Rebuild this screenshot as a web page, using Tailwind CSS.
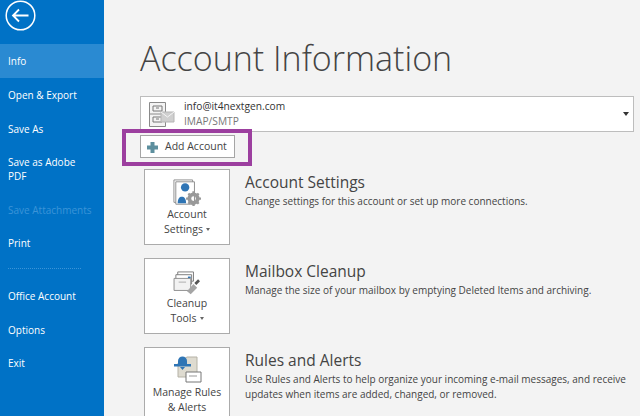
<!DOCTYPE html>
<html lang="en">
<head>
<meta charset="UTF-8">
<title>Account Information</title>
<script src="https://cdn.jsdelivr.net/npm/@tailwindcss/browser@4"></script>
</head>
<body class="bg-[#f3f3f3]">
<div class="flex h-[416px] w-[640px] overflow-hidden font-['Open_Sans',sans-serif] text-[#444]">
  <!-- Sidebar -->
  <aside class="flex w-[104px] shrink-0 flex-col bg-[#0072c6] text-[10px] leading-[14px] text-white">
    <div class="h-[44px] pl-[5px] pt-0">
      <svg width="32" height="32" viewBox="0 0 32 32" fill="none" stroke="white">
        <circle cx="15.5" cy="15.5" r="14.3" stroke-width="1.5"/>
        <path d="M8 15.5h15.5M14 9.500l-6 6 6 6" stroke-width="1.8"/>
      </svg>
    </div>
    <div class="flex h-[34px] items-center bg-[#2a8ad2] pl-2">Info</div>
    <div class="flex h-[34px] items-center pl-2">Open &amp; Export</div>
    <div class="flex h-[33px] items-center pl-2">Save As</div>
    <div class="flex h-[48px] items-center pl-2">Save as Adobe<br>PDF</div>
    <div class="flex h-[33px] items-center pl-2 text-[#3b94d8]">Save Attachments</div>
    <div class="flex h-[33px] items-center pl-2">Print</div>
    <div class="ml-2 mt-[9px] mb-[10px] w-[73px] border-t border-dotted border-[#3b94d8]"></div>
    <div class="flex h-[34px] items-center pl-2">Office Account</div>
    <div class="flex h-[33px] items-center pl-2">Options</div>
    <div class="flex h-[34px] items-center pl-2">Exit</div>
  </aside>

  <main class="min-w-0 flex-1 pl-[36px] pr-[6px]">
    <h1 class="pt-[35px] text-[34px] font-light leading-[47px] text-[#444] whitespace-nowrap">Account Information</h1>

    <!-- Account picker -->
    <div class="mt-[14px] flex h-[36px] items-center border border-[#bdbdbd] bg-white pl-[7px]">
      <svg width="27" height="27" viewBox="0 0 27 27" class="shrink-0">
        <path d="M1.500 1.500h16v24h-16zM1.500 13h16" fill="#f3f3f3" stroke="#8a8a8a"/>
        <path d="M5 5h9v5H5zM5 16h9v5H5zM8 7h3M8 18h3" fill="none" stroke="#777"/>
        <path d="M13 11h13v10H13z" fill="#cfcfcf" stroke="#b5b5b5"/>
        <path d="M13 11l6.500 5 6.500-5" fill="none" stroke="#f5f5f5"/>
      </svg>
      <div class="ml-[9px] flex-1 text-[10.2px] leading-[15px]">
        <div class="text-[#333]">info@it4nextgen.com</div>
        <div class="text-[#777]">IMAP/SMTP</div>
      </div>
      <div class="mr-[4px] h-0 w-0 border-x-[3.5px] border-t-[4px] border-x-transparent border-t-[#333]"></div>
    </div>

    <!-- Add account, highlighted in purple -->
    <div class="relative h-[34px] pt-[3px]">
      <div class="absolute -left-[18px] -top-[3px] h-[37px] w-[130px] border-[4px] border-[#9c3f9f]"></div>
      <button class="relative flex h-[23px] w-[95px] items-center border border-[#a5a5a5] bg-white pb-0 pl-[6px] pt-[1px] text-[10.5px] text-[#444]">
        <svg width="11" height="11" viewBox="0 0 11 11" class="mr-[7px]">
          <path d="M3.500 0h4v3.500H11v4H7.500V11h-4V7.500H0v-4h3.500z" fill="#5d8f9e"/>
        </svg>
        Add Account
      </button>
    </div>

    <!-- Sections -->
    <div class="ml-[4px] mt-[3px] flex flex-col gap-[13px]">
      <section class="flex">
        <div class="flex h-[76px] w-[86px] shrink-0 flex-col items-center border border-[#ababab] bg-white pt-[9px] text-center text-[10.5px] leading-[15px]">
          <svg width="28" height="28" viewBox="0 0 30 30">
            <path d="M1 1h20v24H1z" fill="#fff" stroke="#8a8a8a"/>
            <path d="M3 3h20v24H3z" fill="#fff" stroke="#8a8a8a"/>
            <circle cx="13" cy="9" r="4.500" fill="#2f75b5"/>
            <path d="M5 26c0-5 2-7 4.500-7S14 21 14 26z" fill="#2f75b5"/>
            <circle cx="22" cy="21" r="4.500" fill="none" stroke="#999" stroke-width="4"/>
            <path d="M22 13v3M22 26v3M14 21h3M27 21h3M16.500 15.500l2 2M25.500 24.500l2 2M27.500 15.500l-2 2M18.500 24.500l-2 2" stroke="#999" stroke-width="2.500"/>
          </svg>
          <div>Account</div>
          <div class="flex items-center">Settings<span class="ml-[3px] h-0 w-0 border-x-[2.500px] border-t-[3px] border-x-transparent border-t-[#666]"></span></div>
        </div>
        <div class="ml-[15px] pt-[2px]">
          <h2 class="text-[15.500px] leading-[22px]">Account Settings</h2>
          <p class="mt-[1px] text-[10px] leading-[15px]">Change settings for this account or set up more connections.</p>
        </div>
      </section>

      <section class="flex">
        <div class="flex h-[76px] w-[86px] shrink-0 flex-col items-center border border-[#ababab] bg-white pt-[12px] text-center text-[10.5px] leading-[15px]">
          <svg width="28" height="25" viewBox="0 0 30 27">
            <path d="M5 1h17v10H5z" fill="#fff" stroke="#777"/>
            <path d="M3 4h17v10H3z" fill="#fff" stroke="#777"/>
            <path d="M16 6h3v2h-3z" fill="#2f75b5"/>
            <path d="M1 8h18v13H1z" fill="#f2f2f2" stroke="#8a8a8a"/>
            <path d="M6 12h8" stroke="#aaa"/>
            <path d="M24 14l4-4" stroke="#555" stroke-width="3"/>
            <path d="M15 22l7-8 4 4-7 7z" fill="#a5a5a5"/>
          </svg>
          <div>Cleanup</div>
          <div class="flex items-center">Tools<span class="ml-[3px] h-0 w-0 border-x-[2.500px] border-t-[3px] border-x-transparent border-t-[#666]"></span></div>
        </div>
        <div class="ml-[15px] pt-[2px]">
          <h2 class="text-[15.500px] leading-[22px]">Mailbox Cleanup</h2>
          <p class="mt-[1px] text-[10px] leading-[15px]">Manage the size of your mailbox by emptying Deleted Items and archiving.</p>
        </div>
      </section>

      <section class="flex">
        <div class="flex h-[76px] w-[86px] shrink-0 flex-col items-center border border-[#ababab] bg-white pt-[6px] text-center text-[10.5px] leading-[15px]">
          <svg width="32" height="29" viewBox="0 0 32 29">
            <path d="M7 9l9-6h10v20H7z" fill="#dedbd0" stroke="#b5b2a6"/>
            <path d="M7 7a4.500 4.500 0 0 1 9 0v3H7z" fill="#2f75b5"/>
            <path d="M3 10h17v2.500H3z" fill="#2f75b5"/>
            <path d="M9 13h5l-2.500 3z" fill="#2f75b5"/>
            <path d="M15 18h15v10H15z" fill="#fff" stroke="#777"/>
            <path d="M18 22h8" stroke="#999"/>
          </svg>
          <div class="mt-[2px]">Manage Rules</div>
          <div>&amp; Alerts</div>
        </div>
        <div class="ml-[15px] pt-[2px]">
          <h2 class="text-[15.500px] leading-[22px]">Rules and Alerts</h2>
          <p class="mt-[1px] text-[10px] leading-[15px]">Use Rules and Alerts to help organize your incoming e-mail messages, and receive updates when items are added, changed, or removed.</p>
        </div>
      </section>
    </div>
  </main>
</div>
</body>
</html>
